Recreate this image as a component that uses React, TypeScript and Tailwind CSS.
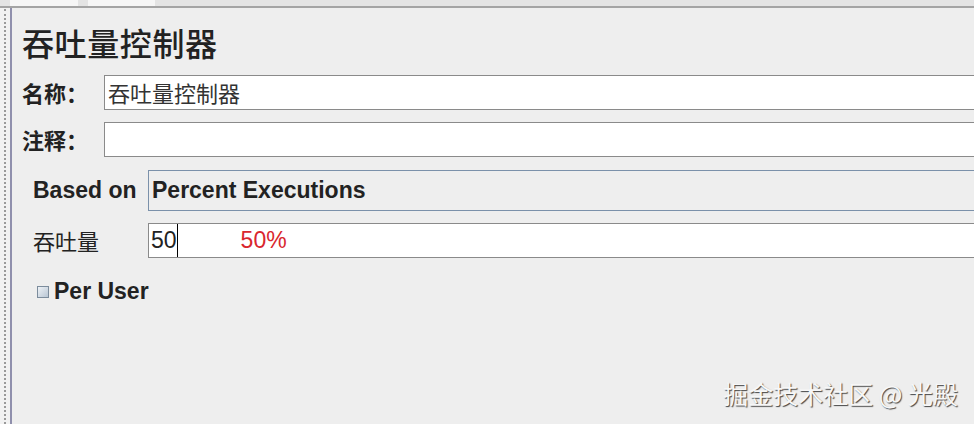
const cjk = "font-['Noto_Sans_CJK_SC',sans-serif]";
const latin = "font-['Liberation_Sans','Noto_Sans_CJK_SC',sans-serif]";

function TopBar() {
  return (
    <div className="h-[8px] flex bg-[#e4e4e4] border-b-2 border-[#a4a4a4]">
      <div className="w-[10px]" />
      <div className="w-[68px] bg-[#f6f6f6]" />
      <div className="w-[10px]" />
      <div className="w-[67px] bg-[#f6f6f6]" />
    </div>
  );
}

export default function App() {
  return (
    <div className="relative w-[974px] h-[424px] overflow-hidden bg-[#eeeeee] text-[#222]">
      <TopBar />
      <div className="flex h-[416px]">
        <div className="w-[10px] bg-[#f2f2f2] flex justify-center pt-[1px]">
          <div className="w-[2px] h-full border-l-2 border-dotted border-[#9a9a9a]" />
        </div>
        <div className="w-[2px] bg-[#8f8fac]" />
        <div className="flex-1 flex flex-col pl-[10px]">
          <div className="h-[67px] flex items-center">
            <h1 className={`${cjk} text-[32px] leading-none font-medium tracking-[0.6px]`}>吞吐量控制器</h1>
          </div>

          <div className="h-[35px] flex items-center">
            <span className={`${cjk} w-[82px] text-[22px] font-bold`}>名称：</span>
            <div className="flex-1 h-full -mr-[4px] bg-white border border-[#8a8a8a] flex items-center pl-[3px]">
              <span className={`${cjk} text-[22px] text-[#333]`}>吞吐量控制器</span>
            </div>
          </div>

          <div className="mt-[12px] h-[35px] flex items-center">
            <span className={`${cjk} w-[82px] text-[22px] font-bold`}>注释：</span>
            <div className="flex-1 h-full -mr-[4px] bg-white border border-[#8a8a8a]" />
          </div>

          <div className="mt-[13px] h-[41px] flex items-center pl-[11px]">
            <span className={`${latin} w-[115px] text-[23px] font-bold`}>Based on</span>
            <div className="flex-1 h-full -mr-[4px] bg-[#eeeeee] border border-[#7b91aa] flex items-center pl-[3px]">
              <span className={`${latin} text-[23px] font-bold`}>Percent Executions</span>
            </div>
          </div>

          <div className="mt-[12px] h-[35px] flex items-center pl-[11px]">
            <span className={`${cjk} w-[115px] text-[22px]`}>吞吐量</span>
            <div className="flex-1 h-full -mr-[4px] bg-white border border-[#8a8a8a] flex items-center pl-[2px]">
              <span className={`${latin} text-[23px]`}>50</span>
              <span className="w-px h-full bg-black" />
              <span className={`${latin} ml-[63px] text-[23px] text-[#d9262e]`}>50%</span>
            </div>
          </div>

          <div className="mt-[20px] h-[27px] flex items-center pl-[15px]">
            <span className="w-[12px] h-[12px] border border-[#7c8c9c] bg-linear-to-br from-[#eef2f6] to-[#b9c6d4]" />
            <span className={`${latin} ml-[5px] text-[23px] font-bold`}>Per User</span>
          </div>
        </div>
      </div>

      <div
        className={`${cjk} absolute right-[16px] bottom-[12px] text-[25px] text-[#f7f7f7] [text-shadow:1px_1px_1px_#444]`}
      >
        掘金技术社区 @ 光殿
      </div>
    </div>
  );
}
